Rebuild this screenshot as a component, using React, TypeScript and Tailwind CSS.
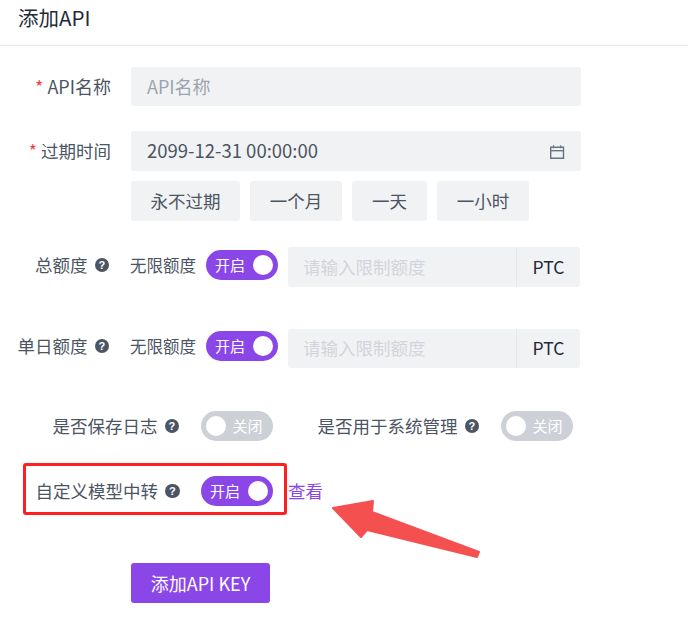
const font = "font-['Noto_Sans_CJK_SC',sans-serif]"

function Help() {
  return (
    <span className="ml-[7px] flex h-[14.5px] w-[14.5px] shrink-0 items-center justify-center rounded-full bg-[#4b5563] font-['Liberation_Sans',sans-serif] text-[11px] leading-none font-bold text-white">?</span>
  )
}

function Toggle({ on }: { on: boolean }) {
  if (on) {
    return (
      <div className="flex h-[30px] w-[72px] shrink-0 items-center justify-between rounded-full bg-[#8b46e8] pr-[5px] pl-[9px] text-[15px] text-white">
        <span>开启</span>
        <span className="h-5 w-5 rounded-full bg-white" />
      </div>
    )
  }
  return (
    <div className="flex h-[30px] w-[72px] shrink-0 items-center justify-between rounded-full bg-[#cdd0d6] pr-[10px] pl-[5px] text-[15px] text-white">
      <span className="h-5 w-5 rounded-full bg-white" />
      <span>关闭</span>
    </div>
  )
}

function Label({ required, help, children }: { required?: boolean; help?: boolean; children: string }) {
  return (
    <div className={`flex shrink-0 items-center justify-end text-[#4b5563] ${help ? 'w-[109px]' : 'w-[111px]'}`}>
      {required && <span className="mr-1 text-[#ef4444]">*</span>}
      <span className="whitespace-nowrap">{children}</span>
      {help && <Help />}
    </div>
  )
}

function QuotaRow({ label, className, height, lift }: { label: string; className: string; height: string; lift: string }) {
  return (
    <div className={`flex items-center ${className}`}>
      <div className={`flex items-center ${lift}`}>
        <Label help>{label}</Label>
        <span className="ml-[21px] w-[66px] text-[16.5px] whitespace-nowrap text-[#4b5563]">无限额度</span>
        <div className="ml-[10px]">
          <Toggle on />
        </div>
      </div>
      <div className={`ml-[10px] flex w-[292px] overflow-hidden rounded-[3px] bg-[#f1f2f4] ${height}`}>
        <span className="flex-1 self-center pl-[15px] text-[#d1d5db]">请输入限制额度</span>
        <span className="flex w-[64px] items-center justify-center border-l border-[#e5e7eb] text-[#1f2937]">PTC</span>
      </div>
    </div>
  )
}

function QuickButton({ width, children }: { width: string; children: string }) {
  return (
    <button className={`h-10 rounded-[3px] bg-[#f1f2f4] text-[#4b5563] ${width}`}>{children}</button>
  )
}

export default function App() {
  return (
    <div className={`relative h-[643px] w-[688px] overflow-hidden bg-white text-[17.5px] ${font}`}>
      <div className="flex h-[46px] items-start border-b border-[#e5e7eb] pl-[18px] text-[20.5px] leading-[34px] text-[#1f2937]">添加API</div>

      <div className="mt-[21px] flex items-center text-[18px]">
        <Label required>API名称</Label>
        <div className="ml-5 flex h-[39px] w-[450px] items-center rounded-[3px] bg-[#f1f2f4] pl-4 text-[#9ca3af]">API名称</div>
      </div>

      <div className="mt-[25px] flex items-center">
        <Label required>过期时间</Label>
        <div className="ml-5 flex h-10 w-[450px] items-center justify-between rounded-[3px] bg-[#f1f2f4] pr-4 pl-4 text-[18.5px] text-[#4b5563]">
          <span>2099-12-31 00:00:00</span>
          <svg width="16" height="16" viewBox="0 0 16 16" fill="none" stroke="#6b7280" strokeWidth="1.4">
            <path d="M1.7 4.3h12.8v11H1.7z" />
            <path d="M1.7 7.7h12.8" />
            <path d="M4.5 2.3v3M11.7 2.3v3" strokeWidth="1.2" />
          </svg>
        </div>
      </div>

      <div className="mt-[10px] ml-[131px] flex gap-[10px]">
        <QuickButton width="w-[109px]">永不过期</QuickButton>
        <QuickButton width="w-[92px]">一个月</QuickButton>
        <QuickButton width="w-[75px]">一天</QuickButton>
        <QuickButton width="w-[92px]">一小时</QuickButton>
      </div>

      <QuotaRow label="总额度" className="mt-[26px]" height="h-10" lift="mb-1" />
      <QuotaRow label="单日额度" className="mt-[42px]" height="h-[39px]" lift="mb-[5px]" />

      <div className="mt-[43px] flex items-center text-[#4b5563]">
        <span className="ml-[52.5px] whitespace-nowrap">是否保存日志</span>
        <Help />
        <div className="ml-[21.5px]">
          <Toggle on={false} />
        </div>
        <span className="ml-[45px] whitespace-nowrap">是否用于系统管理</span>
        <Help />
        <div className="ml-[21.5px]">
          <Toggle on={false} />
        </div>
      </div>

      <div className="mt-[35px] flex items-center text-[#4b5563]">
        <span className="ml-[35.5px] whitespace-nowrap">自定义模型中转</span>
        <Help />
        <div className="ml-[21.5px]">
          <Toggle on />
        </div>
        <a className="ml-[15px] text-[#8b46e8]">查看</a>
      </div>

      <button className="mt-[57px] ml-[131px] h-10 w-[139px] rounded-[3px] bg-[#8b46e8] text-[18px] text-white">添加API KEY</button>

      {/* annotations drawn on top of the screenshot */}
      <div className="absolute top-[463px] left-[23px] h-[52px] w-[264px] rounded-[3px] border-[3px] border-[#ff1f1f]" />
      <svg className="absolute top-[495px] left-[325px]" width="160" height="70" viewBox="325 495 160 70">
        <polygon
          points="333,508 373,501 372,512 479,552 477,557 367,530 361,537"
          fill="#f55050"
          stroke="#f55050"
          strokeWidth="2"
          strokeLinejoin="round"
        />
      </svg>
    </div>
  )
}
